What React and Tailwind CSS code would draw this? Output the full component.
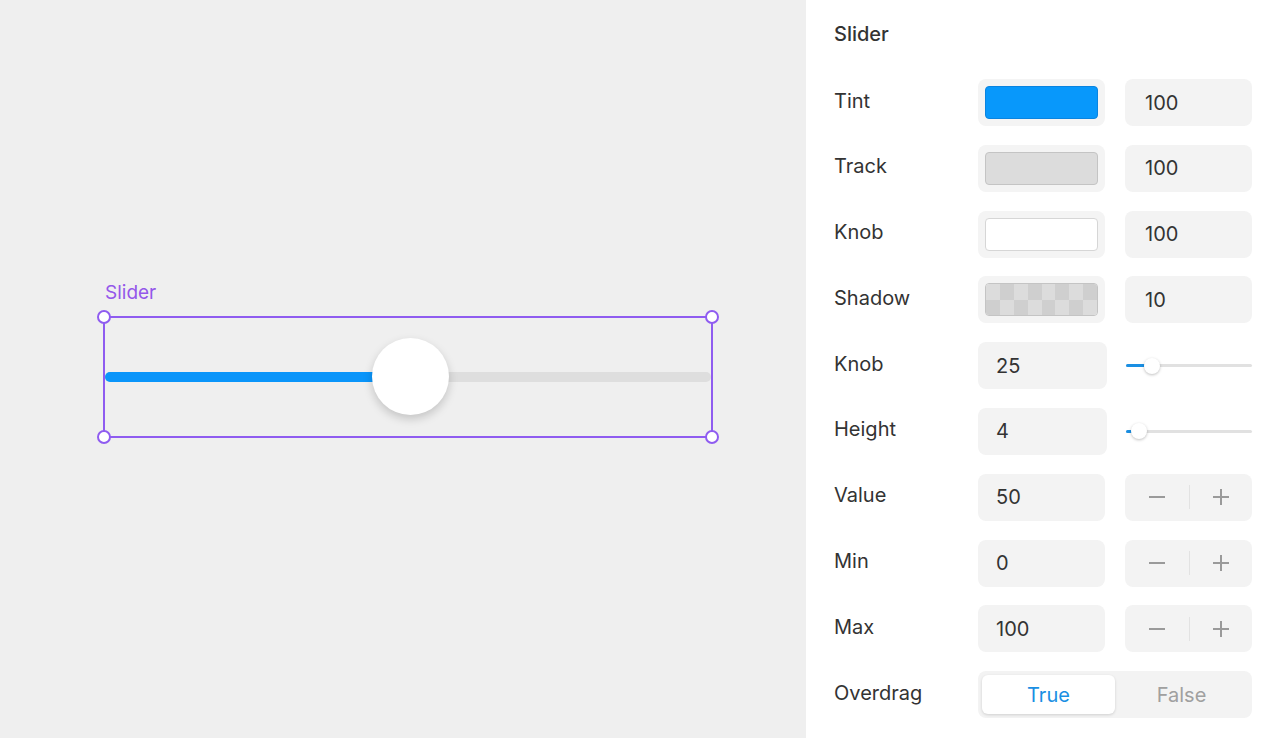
import React from "react";

const font = { fontFamily: "Inter, 'Noto Sans', sans-serif" };

function ColorRow({ label, swatch, value }) {
  return (
    <div className="flex items-center h-[47px]">
      <div className="w-[144px] pb-[4px] text-[20px] text-[#333]">{label}</div>
      <div className="w-[127px] h-[47px] rounded-[8px] bg-[#f4f4f4] p-[7px] flex">{swatch}</div>
      <div className="ml-[20px] w-[127px] h-[47px] rounded-[8px] bg-[#f3f3f3] flex items-center pl-[20px] text-[20px] text-[#333]">
        {value}
      </div>
    </div>
  );
}

function MiniSlider({ pos }) {
  return (
    <div className="ml-[19px] w-[126px] h-[20px] relative flex items-center">
      <div className="w-full h-[3px] rounded-full bg-[#e1e1e1]" />
      <div className="absolute left-0 h-[3px] rounded-full bg-[#1a8fe3]" style={{ width: pos - 7 }} />
      <div
        className="absolute w-[16px] h-[16px] rounded-full bg-white shadow-[0_1px_3px_rgba(0,0,0,0.25)]"
        style={{ left: pos - 8 }}
      />
    </div>
  );
}

function SliderRow({ label, value, pos }) {
  return (
    <div className="flex items-center h-[47px]">
      <div className="w-[144px] pb-[4px] text-[20px] text-[#333]">{label}</div>
      <div className="w-[129px] h-[47px] rounded-[8px] bg-[#f3f3f3] flex items-center pl-[18px] text-[20px] text-[#333]">
        {value}
      </div>
      <MiniSlider pos={pos} />
    </div>
  );
}

function StepperRow({ label, value }) {
  return (
    <div className="flex items-center h-[47px]">
      <div className="w-[144px] pb-[4px] text-[20px] text-[#333]">{label}</div>
      <div className="w-[127px] h-[47px] rounded-[8px] bg-[#f3f3f3] flex items-center pl-[18px] text-[20px] text-[#333]">
        {value}
      </div>
      <div className="ml-[20px] w-[127px] h-[47px] rounded-[8px] bg-[#f3f3f3] flex items-center">
        <div className="flex-1 flex items-center justify-center pl-[1px]">
          <svg width="18" height="18" viewBox="0 0 18 18">
            <line x1="1" y1="9" x2="17" y2="9" stroke="#9a9a9a" strokeWidth="2" />
          </svg>
        </div>
        <div className="w-[1px] h-[24px] bg-[#e2e2e2]" />
        <div className="flex-1 flex items-center justify-center">
          <svg width="18" height="18" viewBox="0 0 18 18">
            <line x1="1" y1="9" x2="17" y2="9" stroke="#9a9a9a" strokeWidth="2" />
            <line x1="9" y1="1" x2="9" y2="17" stroke="#9a9a9a" strokeWidth="2" />
          </svg>
        </div>
      </div>
    </div>
  );
}

function Checker() {
  const cells = [];
  for (let r = 0; r < 2; r++) {
    for (let c = 0; c < 8; c++) {
      cells.push(
        <div key={r + "-" + c} className={(r + c) % 2 === 0 ? "bg-[#dcdcdc]" : "bg-[#cfcfcf]"} />
      );
    }
  }
  return (
    <div className="flex-1 rounded-[4px] border border-[#c4c4c4] overflow-hidden grid grid-cols-8 grid-rows-2">
      {cells}
    </div>
  );
}

function Handle({ className }) {
  return (
    <div
      className={
        "absolute w-[14px] h-[14px] rounded-full bg-white border-2 border-[#8f5cf0] " + className
      }
    />
  );
}

export default function App() {
  return (
    <div className="flex w-full h-[738px] overflow-hidden" style={font}>
      <div className="flex-1 bg-[#efefef] relative">
        <div className="absolute left-[105px] top-[281px] text-[19px] leading-[24px] text-[#9457ea]">Slider</div>
        <div className="absolute left-[103px] top-[316px] w-[610px] h-[122px] border-2 border-[#8f5cf0]">
          <div className="absolute inset-0 flex items-center">
            <div className="w-full h-[10px] rounded-full bg-[#dedede] relative">
              <div className="absolute left-0 top-0 h-[10px] w-[306px] rounded-l-full bg-[#0a95fa]" />
            </div>
          </div>
          <div className="absolute left-[267px] top-[20px] w-[77px] h-[77px] rounded-full bg-white shadow-[0_4px_10px_rgba(0,0,0,0.18)]" />
          <Handle className="-left-[8px] -top-[8px]" />
          <Handle className="-right-[8px] -top-[8px]" />
          <Handle className="-left-[8px] -bottom-[8px]" />
          <Handle className="-right-[8px] -bottom-[8px]" />
        </div>
      </div>
      <div className="w-[474px] bg-white px-[28px] pt-[22px] flex flex-col">
        <div className="h-[24px] text-[20px] leading-[24px] font-medium text-[#333] mb-[33px]">Slider</div>
        <div className="flex flex-col gap-[18.8px]">
          <ColorRow
            label="Tint"
            value="100"
            swatch={<div className="flex-1 rounded-[4px] bg-[#0898fb] border border-[#0a84e0]" />}
          />
          <ColorRow
            label="Track"
            value="100"
            swatch={<div className="flex-1 rounded-[4px] bg-[#dcdcdc] border border-[#c4c4c4]" />}
          />
          <ColorRow
            label="Knob"
            value="100"
            swatch={<div className="flex-1 rounded-[4px] bg-white border border-[#d6d6d6]" />}
          />
          <ColorRow label="Shadow" value="10" swatch={<Checker />} />
          <SliderRow label="Knob" value="25" pos={26} />
          <SliderRow label="Height" value="4" pos={13} />
          <StepperRow label="Value" value="50" />
          <StepperRow label="Min" value="0" />
          <StepperRow label="Max" value="100" />
          <div className="flex items-center h-[47px]">
            <div className="w-[144px] pb-[4px] text-[20px] text-[#333]">Overdrag</div>
            <div className="flex-1 h-[47px] rounded-[8px] bg-[#f3f3f3] p-[4px] flex">
              <div className="w-[133px] rounded-[6px] bg-white shadow-[0_1px_3px_rgba(0,0,0,0.15)] flex items-center justify-center text-[20px] text-[#1a8fe3]">
                True
              </div>
              <div className="flex-1 flex items-center justify-center text-[20px] text-[#a0a0a0]">False</div>
            </div>
          </div>
        </div>
      </div>
    </div>
  );
}
